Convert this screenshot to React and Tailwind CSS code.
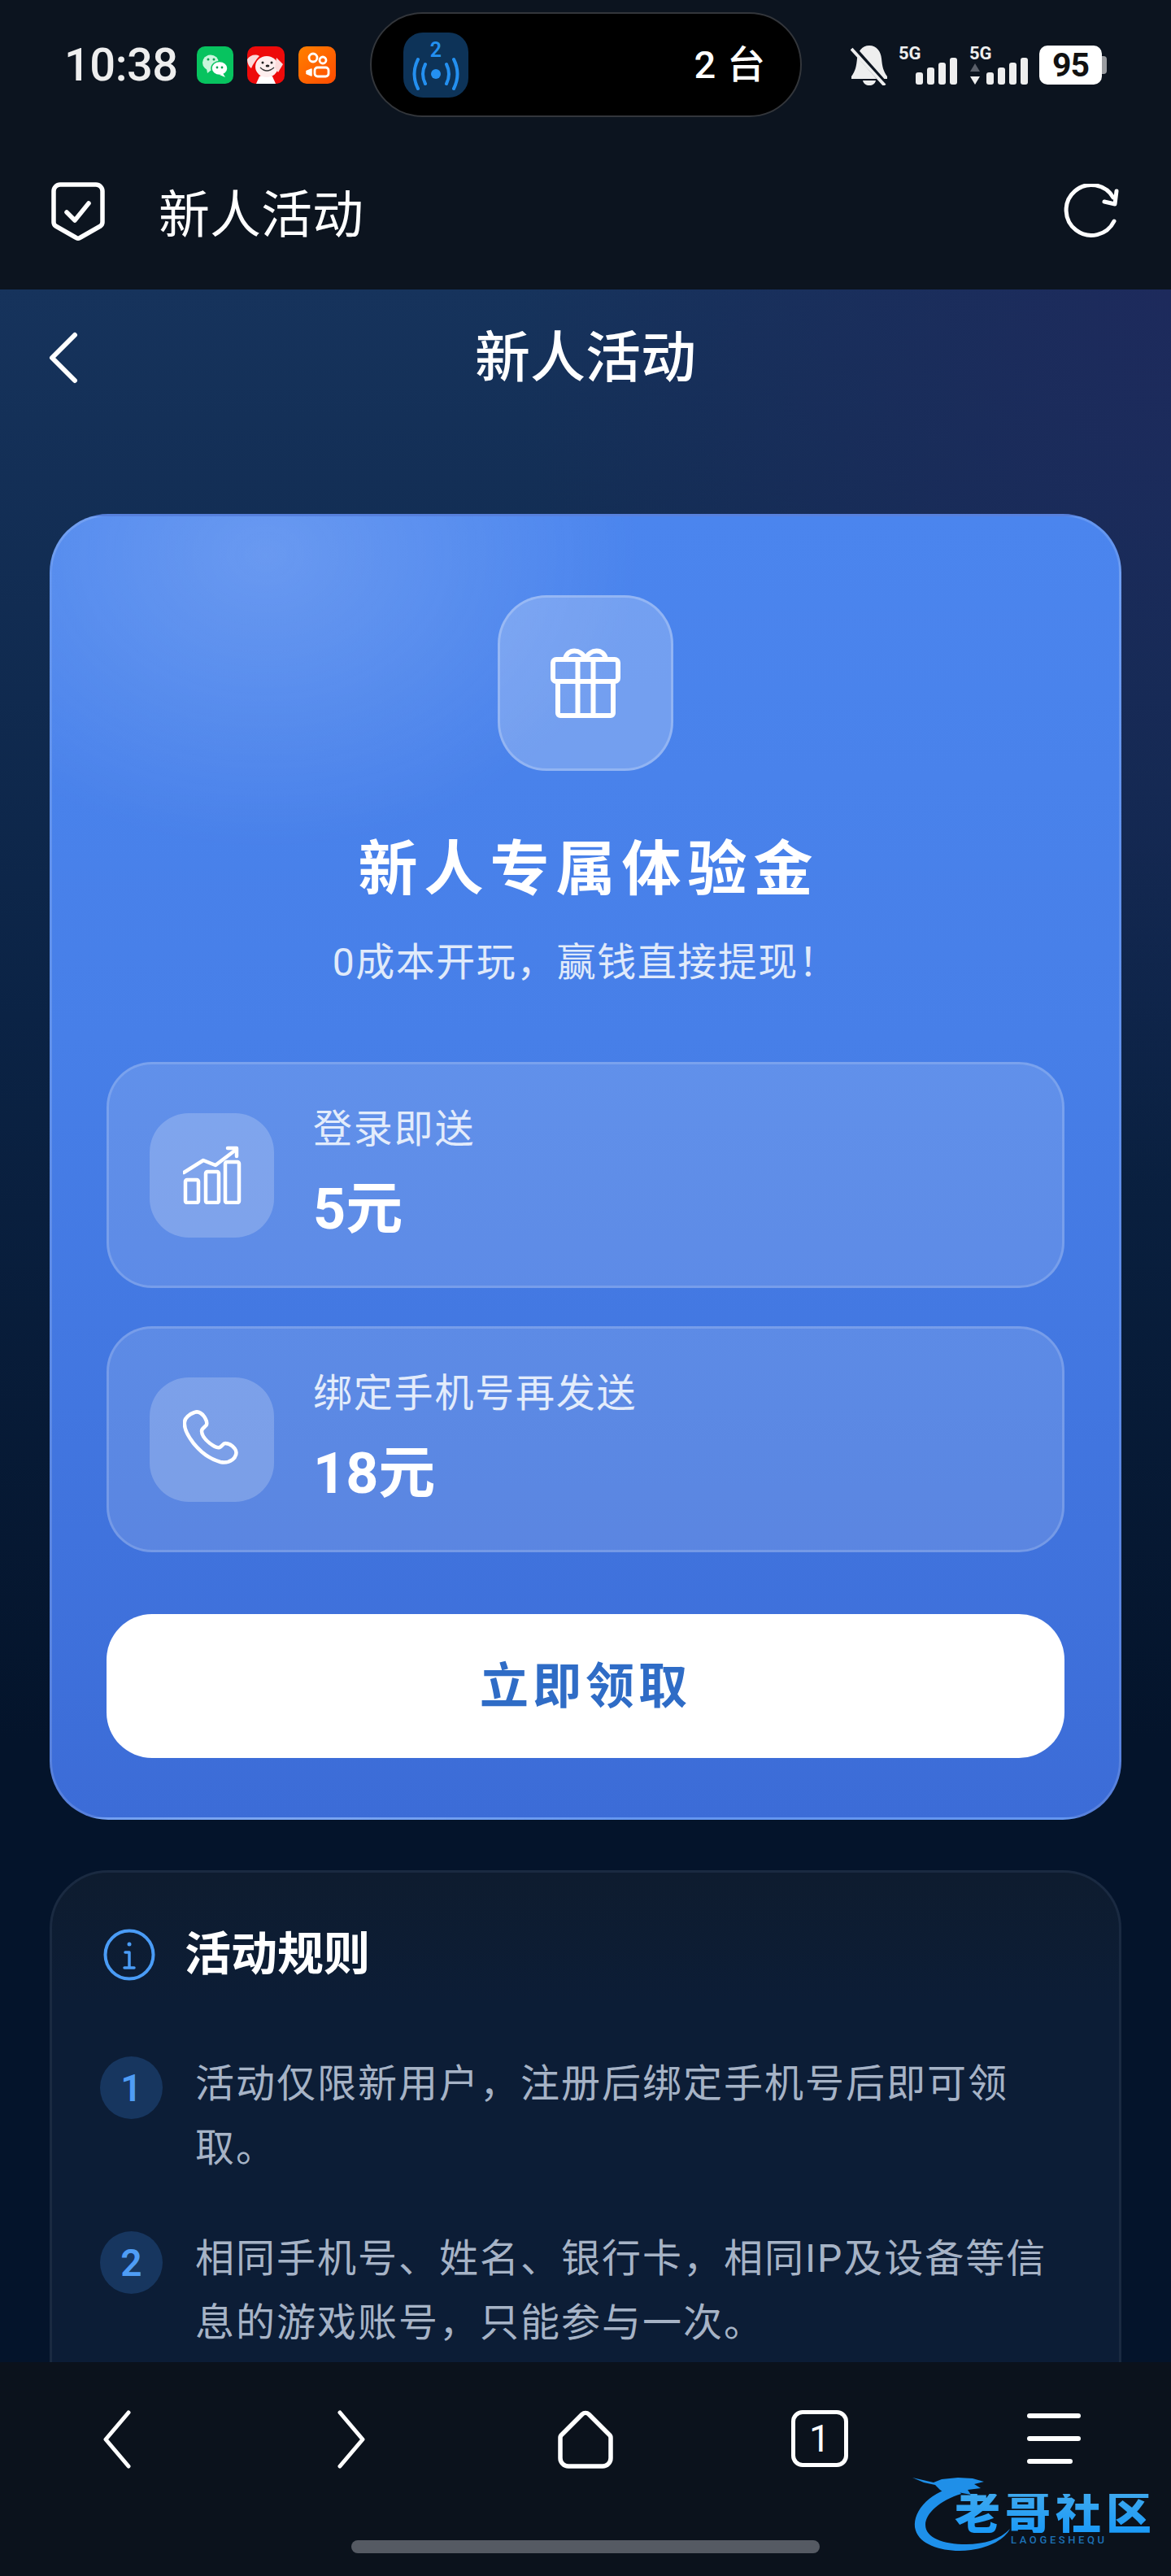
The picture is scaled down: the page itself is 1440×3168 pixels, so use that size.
import React from "react";

const Bars = () => (
  <div className="flex items-end gap-[5px] h-[33px]">
    <div className="w-[9px] h-[15px] rounded-[3px] bg-[#eeeeee]" />
    <div className="w-[9px] h-[21px] rounded-[3px] bg-[#eeeeee]" />
    <div className="w-[9px] h-[27px] rounded-[3px] bg-[#eeeeee]" />
    <div className="w-[9px] h-[33px] rounded-[3px] bg-[#eeeeee]" />
  </div>
);

const Wechat = () => (
  <svg width="45" height="46" viewBox="0 0 45 46">
    <rect width="45" height="46" rx="10" fill="#07c35f" />
    <ellipse cx="17" cy="20" rx="10" ry="9.5" fill="#c9f5dc" />
    <path d="M12 27l1 6 5-4z" fill="#c9f5dc" />
    <ellipse cx="28" cy="27" rx="10" ry="8.500" fill="#fff" stroke="#07c35f" strokeWidth="1.5" />
    <path d="M32 33l3 5-7-3z" fill="#fff" />
    <circle cx="14" cy="16" r="1.5" fill="#07a050" />
    <circle cx="21" cy="16" r="1.5" fill="#07a050" />
    <circle cx="25" cy="26" r="1.4" fill="#07a050" />
    <circle cx="31" cy="26" r="1.4" fill="#07a050" />
  </svg>
);

const Jd = () => (
  <svg width="46" height="46" viewBox="0 0 46 46">
    <rect width="46" height="46" rx="10" fill="#ee0a0a" />
    <path d="M15 37c3-2 13-2 16 0l4 9H11z" fill="#fff" />
    <ellipse cx="24" cy="25" rx="14" ry="13" fill="#fdeeee" />
    <path d="M0 16c3-5 10-7 15-4-4 4-8 10-10 15-3-2-5-7-5-11z" fill="#fbd8d8" />
    <path d="M36 14l8 8-6 10-4-6z" fill="#fbdcdc" />
    <circle cx="19" cy="20" r="1.5" fill="#222" />
    <circle cx="30" cy="20" r="1.5" fill="#222" />
    <ellipse cx="25" cy="24" rx="2.400" ry="1.600" fill="#222" />
    <path d="M16 26q8 8 17 0" fill="none" stroke="#333" strokeWidth="1.3" />
  </svg>
);

const Kuaishou = () => (
  <svg width="46" height="46" viewBox="0 0 46 46">
    <defs>
      <linearGradient id="ks" x1="0" y1="0" x2="1" y2="1">
        <stop offset="0" stopColor="#ff8000" />
        <stop offset="1" stopColor="#ff4b00" />
      </linearGradient>
    </defs>
    <rect width="46" height="46" rx="10" fill="url(#ks)" />
    <circle cx="18" cy="14" r="5" fill="none" stroke="#fff" strokeWidth="2.800" />
    <circle cx="30" cy="17" r="4" fill="none" stroke="#fff" strokeWidth="2.800" />
    <rect x="20" y="26" width="17" height="11" rx="3.500" fill="none" stroke="#fff" strokeWidth="2.800" />
    <path d="M16 28l-6 2.500v3l6 2.500z" fill="#fff" stroke="#fff" strokeWidth="1.500" strokeLinejoin="round" />
  </svg>
);

const Logo = () => (
  <div className="absolute left-[1120px] top-[3040px] w-[310px] h-[105px] pointer-events-none">
    <svg className="absolute left-0 top-0" width="200" height="105" viewBox="0 0 200 105">
      <path d="M55 18C20 26 0 52 6 72c6 20 40 28 68 24 24-3 42-14 48-26-12 13-32 19-54 19-28 0-50-8-50-24 0-14 18-30 44-38z" fill="#1e90ea" />
      <path d="M2 7l26 6 10-4 20-2 18 1 14 4-12 3 8 5-16 2 4 6-16-3-14 3-8-6-6-6-14-3z" fill="#1f8fe8" />
    </svg>
    <div className="absolute left-[54px] top-[27px] w-[250px] h-[48px] text-[56px] leading-[48px] font-black tracking-[6px] whitespace-nowrap bg-[linear-gradient(180deg,#3ea8ee,#1a9af8)] bg-clip-text text-transparent">
      老哥社区
    </div>
    <div className="absolute left-[123px] top-[77px] text-[13px] leading-[14px] font-medium tracking-[3.6px] text-[#1d70b5] whitespace-nowrap">
      LAOGESHEQU
    </div>
  </div>
);

const Reward = ({ icon, label, value }) => (
  <div className="box-border h-[278px] flex items-center pl-[50px] rounded-[56px] border-[3px] border-[rgba(255,255,255,0.16)] bg-[rgba(255,255,255,0.14)]">
    <div className="w-[153px] h-[153px] rounded-[48px] bg-[rgba(255,255,255,0.2)] flex items-center justify-center shrink-0">
      {icon}
    </div>
    <div className="ml-[48px] flex flex-col pb-[5px]">
      <div className="text-[48px] leading-[60px] tracking-[1.8px] text-[#e3ecfb]">{label}</div>
      <div className="mt-[28px] text-[70px] leading-[80px] font-bold text-white">{value}</div>
    </div>
  </div>
);

const Rule = ({ n, children, className }) => (
  <div className={`flex items-start ${className || ""}`}>
    <div className="mt-[6px] w-[77px] h-[77px] rounded-full bg-[#17365f] flex items-center justify-center text-[46px] leading-none font-semibold text-[#4f9df5] shrink-0">
      {n}
    </div>
    <div className="ml-[40px] w-[1060px] text-[48px] leading-[79px] tracking-[2px] text-[#a6b3c6]">{children}</div>
  </div>
);

export default function App() {
  return (
    <div className="relative w-[1440px] h-[3168px] overflow-hidden flex flex-col bg-[#0c141f] font-['Roboto','Noto_Sans_CJK_SC',sans-serif]">
      {/* top chrome */}
      <div className="h-[356px] shrink-0 bg-[#0c141f] flex flex-col">
        <div className="h-[164px] pt-[15px] box-border grid grid-cols-[455px_531px_1fr]">
          <div className="h-[129px] flex items-center pl-[79px]">
            <span className="text-[56px] leading-none font-medium tracking-[-0.5px] text-[#eeeeee] w-[163px]">10:38</span>
            <div className="flex gap-[17px]">
              <Wechat />
              <Jd />
              <Kuaishou />
            </div>
          </div>
          <div className="box-border h-[129px] rounded-[65px] bg-black border-[2px] border-[#33363b] flex items-center pl-[39px] pr-[42px] justify-between">
            <svg width="80" height="80" viewBox="0 0 80 80">
              <rect width="80" height="80" rx="24" fill="#0d3358" />
              <text x="40" y="30" textAnchor="middle" fontSize="25" fontWeight="600" fill="#2490f0" fontFamily="Roboto">2</text>
              <circle cx="40" cy="51" r="6" fill="#2490f0" />
              <path d="M27 39q-6 12 0 24M53 39q6 12 0 24M18 33q-9 18 0 36M62 33q9 18 0 36" fill="none" stroke="#2490f0" strokeWidth="4" strokeLinecap="round" />
            </svg>
            <span className="text-[47px] leading-none font-medium tracking-[1px] text-white">2 台</span>
          </div>
          <div className="h-[129px] flex items-center pl-[60px] pt-[1px]">
            <svg width="46" height="50" viewBox="0 0 46 50" className="shrink-0">
              <path d="M23 1c9 0 14 7 15 16 1 10 2 15 7 22v3H1v-3c5-7 6-12 7-22C9 8 14 1 23 1z" fill="#eeeeee" />
              <path d="M15 44h16c-1 4-4 6-8 6s-7-2-8-6z" fill="#eeeeee" />
              <path d="M3 4l40 45" stroke="#0c141f" strokeWidth="7" />
              <path d="M1 5l41 45" stroke="#eeeeee" strokeWidth="4" />
            </svg>
            <div className="relative ml-[13px] w-[72px] h-[48px] flex items-end justify-end">
              <span className="absolute left-0 -top-[1px] text-[22px] leading-[22px] font-bold text-[#eeeeee]">5G</span>
              <Bars />
            </div>
            <div className="relative ml-[15px] w-[72px] h-[48px] flex items-end justify-end">
              <span className="absolute left-0 -top-[1px] text-[22px] leading-[22px] font-bold text-[#eeeeee]">5G</span>
              <svg className="absolute left-0 bottom-0" width="14" height="26" viewBox="0 0 14 26">
                <path d="M7 0l6 10H1z" fill="#5a5f69" />
                <path d="M7 26l6-10H1z" fill="#eeeeee" />
              </svg>
              <Bars />
            </div>
            <div className="ml-[14px] relative w-[77px] h-[48px] rounded-[10px] bg-white flex items-center justify-center text-[41px] leading-none font-bold tracking-[-1px] text-[#111]">
              95
              <div className="absolute -right-[6px] top-[13px] w-[6px] h-[22px] rounded-r-[4px] bg-[#9a9ca0]" />
            </div>
          </div>
        </div>
        <div className="flex-1 flex items-center pl-[63px] pr-[63px]">
          <svg width="66" height="72" viewBox="0 0 66 72" fill="none" stroke="#fff" strokeWidth="5.5" strokeLinecap="round" strokeLinejoin="round" className="shrink-0">
            <path d="M11 3h44a8 8 0 0 1 8 8v38a6 6 0 0 1-2.500 5L36 68a5 5 0 0 1-6 0L5.500 54A6 6 0 0 1 3 49V11a8 8 0 0 1 8-8z" />
            <path d="M19 37l10 10 17-21" />
          </svg>
          <div className="ml-[66px] pt-[10px] text-[63px] leading-[72px] text-white">新人活动</div>
          <svg width="70" height="68" viewBox="0 0 70 68" fill="none" stroke="#fff" strokeWidth="5" strokeLinecap="round" strokeLinejoin="round" className="ml-auto shrink-0">
            <path d="M62 17A31 31 0 1 0 63 46" />
            <path d="M66 9l-2 16-13-3" />
          </svg>
        </div>
      </div>

      {/* page */}
      <div className="flex-1 min-h-0 overflow-hidden bg-[radial-gradient(ellipse_800px_1100px_at_100%_0%,#1d2a5c,transparent),linear-gradient(180deg,#16335c,#0b2345_35%,#04142b_70%,#04142b)]">
        <div className="h-[164px] mb-[112px] flex items-center relative">
          <svg width="40" height="64" viewBox="0 0 40 64" fill="none" stroke="#fff" strokeWidth="6" strokeLinecap="round" strokeLinejoin="round" className="absolute left-[58px] top-[52px]">
            <path d="M34 4L6 32l28 28" />
          </svg>
          <div className="w-full pt-[5px] text-center text-[68px] leading-[80px] font-medium text-white">新人活动</div>
        </div>

        {/* hero */}
        <div className="mx-[61px] box-border h-[1606px] rounded-[72px] border-[3px] border-[rgba(255,255,255,0.14)] px-[67px] pt-[97px] bg-[radial-gradient(ellipse_460px_360px_at_20%_3%,rgba(255,255,255,0.17),transparent),linear-gradient(180deg,#4b85ee,#477fe8_40%,#3c6cd7)] flex flex-col">
          <div className="self-center box-border w-[216px] h-[216px] rounded-[60px] border-[3px] border-[rgba(255,255,255,0.22)] bg-[rgba(255,255,255,0.23)] flex items-center justify-center">
            <svg width="88" height="86" viewBox="0 0 88 86" fill="none" stroke="#fff" strokeWidth="6" strokeLinejoin="round" strokeLinecap="round">
              <rect x="4" y="14" width="80" height="27" rx="4" />
              <path d="M10 41v39a3 3 0 0 0 3 3h62a3 3 0 0 0 3-3V41" />
              <path d="M34.500 14v69M53.500 14v69" />
              <path d="M19 14c2-14 20-14 25 0c5-14 23-14 25 0" />
            </svg>
          </div>
          <div className="mt-[76px] pl-[8px] text-center text-[73px] leading-[90px] font-bold tracking-[8px] text-white">新人专属体验金</div>
          <div className="mt-[38px] text-center text-[48px] leading-[64px] tracking-[1.5px] text-[#e0eafa]">{"0成本开玩\uFF0C赢钱直接提现\uFF01"}</div>

          <div className="mt-[90px] flex flex-col gap-[47px]">
            <Reward
              label="登录即送"
              value="5元"
              icon={
                <svg width="72" height="72" viewBox="0 0 72 72" fill="none" stroke="#fff" strokeWidth="4.5" strokeLinecap="round" strokeLinejoin="round">
                  <rect x="3" y="42" width="16" height="28" rx="2" />
                  <rect x="28" y="32" width="16" height="38" rx="2" />
                  <rect x="52" y="20" width="17" height="50" rx="2" />
                  <path d="M1 33l24-15 15 6 25-19" />
                  <path d="M55 3h11v10" />
                </svg>
              }
            />
            <Reward
              label="绑定手机号再发送"
              value="18元"
              icon={
                <svg width="72" height="72" viewBox="0 0 72 72" fill="none" stroke="#fff" strokeWidth="4.5" strokeLinecap="round" strokeLinejoin="round">
                  <path d="M14 3c5-2 9 1 12 5 2 3 4 7 3 10-1 3-6 4-6 8 0 5 5 11 10 15 4 3 8 6 12 5 3-1 4-5 7-5 4 0 9 3 12 7 3 4 1 10-3 13-4 3-10 4-15 3C34 61 22 52 13 41 6 32 1 23 2 15 2 10 8 5 14 3z" />
                </svg>
              }
            />
          </div>

          <div className="mt-[76px] h-[177px] pt-[2px] box-border rounded-[56px] bg-white flex items-center justify-center text-[60px] leading-none font-bold tracking-[5px] text-[#2f6cc6]">
            立即领取
          </div>
        </div>

        {/* rules */}
        <div className="mx-[61px] mt-[62px] box-border h-[800px] rounded-[72px] border-[3px] border-[#1a2a41] pl-[59px] pt-[66px] bg-[linear-gradient(180deg,#0e1c2f,#0c1d36_20%)]">
          <div className="flex items-center ml-[4px] h-[70px]">
            <svg width="64" height="64" viewBox="0 0 64 64" fill="none" stroke="#4a9cf6" strokeWidth="4" strokeLinecap="round" strokeLinejoin="round">
              <circle cx="32" cy="32" r="29.500" />
              <circle cx="32" cy="19" r="2.500" fill="#4a9cf6" stroke="none" />
              <path d="M27 29h5v19M26 48h12" strokeWidth="3.5" />
            </svg>
            <div className="ml-[36px] text-[57px] leading-[70px] font-bold text-white">活动规则</div>
          </div>
          <div className="mt-[84px]">
            <Rule n="1">{"活动仅限新用户\uFF0C注册后绑定手机号后即可领"}<br />{"取。"}</Rule>
            <Rule n="2" className="mt-[57px]">{"相同手机号、姓名、银行卡\uFF0C相同IP及设备等信息的游戏账号\uFF0C只能参与一次。"}</Rule>
          </div>
        </div>
      </div>

      {/* bottom nav */}
      <div className="relative h-[263px] shrink-0 bg-[#0b121c] flex flex-col">
        <div className="grid grid-cols-5 pt-[59px] h-[219px] box-border">
          <div className="flex justify-center">
            <svg width="36" height="72" viewBox="0 0 36 72" fill="none" stroke="#fff" strokeWidth="5" strokeLinecap="round" strokeLinejoin="round">
              <path d="M32 3L4 36l28 33" />
            </svg>
          </div>
          <div className="flex justify-center">
            <svg width="36" height="72" viewBox="0 0 36 72" fill="none" stroke="#fff" strokeWidth="5" strokeLinecap="round" strokeLinejoin="round">
              <path d="M4 3l28 33L4 69" />
            </svg>
          </div>
          <div className="flex justify-center">
            <svg width="70" height="72" viewBox="0 0 70 72" fill="none" stroke="#fff" strokeWidth="5.5" strokeLinecap="round" strokeLinejoin="round">
              <path d="M31 5a6 6 0 0 1 8 0l25 25a5 5 0 0 1 2 4v25a10 10 0 0 1-10 10H14A10 10 0 0 1 4 59V34a5 5 0 0 1 2-4z" />
            </svg>
          </div>
          <div className="flex justify-center">
            <div className="box-border w-[70px] h-[70px] rounded-[14px] border-[5px] border-white flex items-center justify-center text-[46px] leading-none text-white">1</div>
          </div>
          <div className="flex justify-center pt-[4px]">
            <div className="w-[66px] flex flex-col gap-[22px]">
              <div className="h-[6px] rounded-full bg-white" />
              <div className="h-[6px] rounded-full bg-white" />
              <div className="h-[6px] w-[56px] rounded-full bg-white" />
            </div>
          </div>
        </div>
        <div className="w-[576px] h-[16px] rounded-full bg-[#555a63] self-center" />
      </div>

      <Logo />
    </div>
  );
}
